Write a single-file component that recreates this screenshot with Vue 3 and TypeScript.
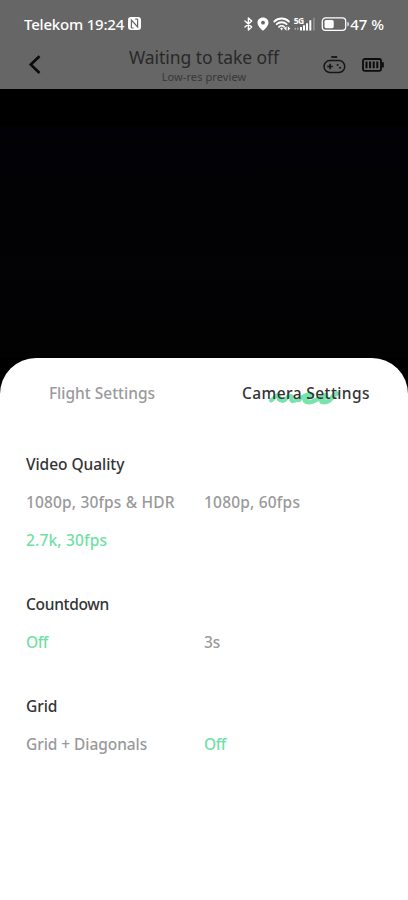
<script setup lang="ts">
import { ref } from 'vue'

interface Option {
  label: string
  spacing: string
}

interface Section {
  title: string
  spacing: string
  selected: number
  options: Option[]
}

const tab = ref<'flight' | 'camera'>('camera')

const sections = ref<Section[]>([
  {
    title: 'Video Quality',
    spacing: '-0.05px',
    selected: 2,
    options: [
      { label: '1080p, 30fps & HDR', spacing: '0.15px' },
      { label: '1080p, 60fps', spacing: '0.2px' },
      { label: '2.7k, 30fps', spacing: '0.18px' },
    ],
  },
  {
    title: 'Countdown',
    spacing: '-0.3px',
    selected: 0,
    options: [
      { label: 'Off', spacing: '-0.5px' },
      { label: '3s', spacing: '0px' },
    ],
  },
  {
    title: 'Grid',
    spacing: '-0.1px',
    selected: 1,
    options: [
      { label: 'Grid + Diagonals', spacing: '-0.07px' },
      { label: 'Off', spacing: '-0.5px' },
    ],
  },
])
</script>

<template>
  <main class="screen">
    <div class="top">
      <div class="status">
        <span class="carrier">Telekom 19:24</span>
        <svg class="nfc" width="13" height="13" viewBox="0 0 13 13">
          <rect width="13" height="13" rx="3" fill="#fff" />
          <path d="M3.4 11V3l6.2 7V2.2M5.6 11H3.4M7.2 2.2h2.4" fill="none" stroke="#666" stroke-width="1.2" />
        </svg>
        <svg class="indicators" width="106" height="16" viewBox="0 0 106 16">
          <g fill="none" stroke="#fff" stroke-width="1.4" stroke-linejoin="round" stroke-linecap="round">
            <path d="M2 5l6.7 6L5.4 14V2l3.300 3L2 11" />
          </g>
          <path d="M20 1.400c-3.300 0-5.500 2.300-5.500 5.200 0 3.400 3.400 6.400 5.500 8.200 2.100-1.800 5.500-4.800 5.500-8.200 0-2.900-2.200-5.200-5.500-5.200z" fill="#fff" />
          <circle cx="20" cy="6.7" r="1.9" fill="#666" />
          <g fill="none" stroke="#fff" stroke-width="1.8" stroke-linecap="round">
            <path d="M31.300 5.500c4-4 10.600-4 14.600 0M33.700 8.200c2.700-2.600 7.200-2.600 9.900 0M36 10.800c1.400-1.300 3.800-1.300 5.200 0" />
          </g>
          <path d="M37.200 12.600l1.400-1 1.400 1-1.400 2zM41 12.500l2.500-2.200v4.400zM47.300 12.500l-2.500-2.200v4.400z" fill="#fff" />
          <text x="50.800" y="7.7" class="gen">5G</text>
          <g fill="#fff">
            <path d="M51.500 11.8h1.6v2h-1.6zM54 11.8h1.6v2H54z" opacity=".4" />
            <path d="M57 11h2v3.4h-2zM60 9.2h2v5.2h-2zM63 7.2h2v7.2h-2zM66.300 4.3h2v10.1h-2z" />
            <path d="M70 1.7h1.8v12.7H70z" opacity=".25" />
          </g>
          <rect x="79.300" y="1.9" width="23.4" height="12.4" rx="3.4" fill="none" stroke="#fff" stroke-width="1.3" />
          <rect x="81.500" y="4" width="9.2" height="8.2" rx="1.6" fill="#fff" />
          <path d="M104.500 6q1.2 0 1.2 1v2.2q0 1-1.2 1z" fill="#fff" />
        </svg>
        <span class="percent">47 %</span>
      </div>
      <header class="header">
        <button class="back" aria-label="Back">
          <svg width="14" height="20" viewBox="0 0 14 20">
            <path d="M11.5 1.2L2.8 9.6l8.7 8.4" fill="none" stroke="#0b0b0b" stroke-width="2.7" />
          </svg>
        </button>
        <div class="heading">
          <h1>Waiting to take off</h1>
          <p>Low-res preview</p>
        </div>
        <div class="tools">
          <svg width="23" height="18" viewBox="0 0 23 18">
            <path d="M8.2 1h6" stroke="#151515" stroke-width="1.8" />
            <rect x="1.1" y="4.5" width="20.6" height="12" rx="5.8" fill="none" stroke="#151515" stroke-width="1.5" />
            <path d="M4.2 10.5h5.6M7 7.7v5.6" stroke="#151515" stroke-width="1.6" />
            <circle cx="14.6" cy="9" r="1" fill="#151515" />
            <circle cx="17" cy="11.8" r="1" fill="#151515" />
          </svg>
          <svg width="23" height="14" viewBox="0 0 23 14">
            <rect x="1" y="1" width="18" height="11.8" rx="1.8" fill="none" stroke="#0c0c0c" stroke-width="1.8" />
            <path d="M4.5 3.6v6.6M8.1 3.6v6.6M11.7 3.6v6.6M15.3 3.6v6.6" stroke="#0c0c0c" stroke-width="2" />
            <path d="M20.9 4.2v5.4" stroke="#0c0c0c" stroke-width="1.8" />
          </svg>
        </div>
      </header>
    </div>
    <div class="preview"></div>
    <section class="sheet">
      <nav class="tabs">
        <button class="tab" :class="{ active: tab === 'flight' }" @click="tab = 'flight'">
          <span>Flight Settings</span>
        </button>
        <button class="tab" :class="{ active: tab === 'camera' }" @click="tab = 'camera'">
          <svg v-if="tab === 'camera'" class="scribble" width="76" height="16" viewBox="0 0 76 16">
            <path
              d="M3 10.500C6 8.500 8 5 10 5s-.5 4 1.500 5S16 12 18 9s3-4 5-3-1 4 1 5 5-2 7-1"
              fill="none" stroke="#79e3ae" stroke-width="4" stroke-linecap="round" stroke-linejoin="round"
            />
            <path
              d="M31 10C34 6 42 3 44 4.500S35 9 37 11s7 1 11-1 8-6 10-5-7 6-4 7 8-1 9-3 4-5 6-5.500"
              fill="none" stroke="#79e3ae" stroke-width="4.400" stroke-linecap="round" stroke-linejoin="round"
            />
          </svg>
          <span class="wide">Camera Settings</span>
        </button>
      </nav>
      <div class="sections">
        <section v-for="s in sections" :key="s.title" class="group">
          <h2 :style="{ letterSpacing: s.spacing }">{{ s.title }}</h2>
          <div class="options">
            <button
              v-for="(o, i) in s.options" :key="o.label" class="option"
              :class="{ selected: i === s.selected }" :style="{ letterSpacing: o.spacing }"
              @click="s.selected = i"
            >{{ o.label }}</button>
          </div>
        </section>
      </div>
    </section>
  </main>
</template>

<style>
body {
  margin: 0;
  background: #000;
}
</style>

<style scoped>
.screen {
  width: 408px;
  height: 900px;
  display: flex;
  flex-direction: column;
  overflow: hidden;
  background: #000;
  font-family: "Noto Sans", sans-serif;
}
button {
  padding: 0;
  border: 0;
  background: none;
  font: inherit;
  color: inherit;
  text-align: left;
}
h1, h2, p {
  margin: 0;
  font-size: inherit;
  font-weight: inherit;
}
.top {
  height: 89px;
  flex: none;
  background: #666;
}
.status {
  height: 47px;
  display: flex;
  align-items: center;
  padding: 0 24px;
  color: #fff;
  font-size: 15px;
  font-weight: 500;
  line-height: 20px;
  white-space: nowrap;
}
.carrier {
  width: 105px;
  letter-spacing: -0.2px;
}
.indicators {
  margin-left: 102px;
}
.nfc, .indicators {
  flex: none;
}
.gen {
  font: 700 8.5px "Open Sans", sans-serif;
  letter-spacing: -0.6px;
  fill: #fff;
}
.percent {
  margin-left: 1px;
}
.header {
  display: grid;
  grid-template-columns: 100px 208px 100px;
  height: 42px;
}
.back {
  padding: 8px 0 0 28px;
  display: flex;
}
.heading {
  text-align: center;
  color: #292929;
}
.heading h1 {
  font-size: 17.5px;
  line-height: 21px;
  font-weight: 400;
  letter-spacing: -0.06px;
}
.heading p {
  margin-top: 1px;
  font-size: 11px;
  line-height: 15px;
  letter-spacing: 0.1px;
  color: #383838;
}
.tools {
  display: flex;
  gap: 16px;
  padding-left: 15px;
  height: 35px;
  align-items: center;
}
.preview {
  height: 269px;
  flex: none;
  background: linear-gradient(#000 37px, #020107 38px, #020104 90px, #030203 100%);
}
.sheet {
  flex: 1;
  background: #fff;
  border-radius: 36px 36px 0 0;
  font-size: 15.5px;
  font-weight: 500;
  line-height: 20px;
}
.tabs {
  display: grid;
  grid-template-columns: 1fr 1fr;
  padding-top: 25px;
  height: 20px;
}
.tab {
  display: grid;
  place-items: center;
  height: 20px;
  color: #9a9a9a;
}
.tab.active {
  color: #333;
}
.tab > * {
  grid-area: 1 / 1;
}
.tab span {
  z-index: 1;
}
.wide {
  letter-spacing: 0.4px;
}
.scribble {
  transform: translateY(5px);
}
.sections {
  display: flex;
  flex-direction: column;
  gap: 44px;
  padding: 51px 26px 0;
  color: #333;
}
.options {
  display: grid;
  grid-template-columns: 178px 178px;
  row-gap: 18px;
  margin-top: 18px;
}
.option {
  color: #999;
  white-space: nowrap;
}
.option.selected {
  color: #6fdfa5;
}
</style>
